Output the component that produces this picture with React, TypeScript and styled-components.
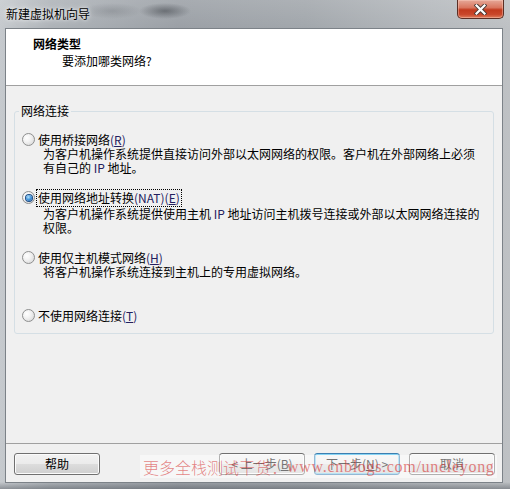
import React from 'react';
import styled, { createGlobalStyle } from 'styled-components';

const GlobalStyle = createGlobalStyle`
  html, body {
    margin: 0;
    padding: 0;
  }
  body {
    width: 510px;
    height: 489px;
    overflow: hidden;
    font-family: "Noto Sans CJK SC", "Liberation Sans", sans-serif;
    font-size: 12px;
    color: #000;
  }
`;

const Window = styled.div`
  position: relative;
  width: 510px;
  height: 489px;
  box-sizing: border-box;
  padding: 0 7px 6px 5px;
  display: flex;
  flex-direction: column;
  background:
    radial-gradient(ellipse 26px 8px at 165px 11px, rgba(60, 64, 70, 0.55), transparent),
    radial-gradient(ellipse 30px 8px at 112px 11px, rgba(100, 104, 110, 0.3), transparent),
    linear-gradient(to top, rgba(70, 76, 84, 0.45) 0, rgba(70, 76, 84, 0) 7px),
    linear-gradient(to bottom, rgba(255, 255, 255, 0.12) 0, rgba(255, 255, 255, 0) 28px),
    linear-gradient(to right, #c6cace 0%, #aeb3b8 10%, #9ba0a6 35%, #a2a7ac 60%, #b5b9bd 85%, #bec1c4 100%);
`;

const TitleBar = styled.div`
  height: 28px;
  flex: none;
  display: flex;
  align-items: flex-start;
  justify-content: space-between;
`;

const TitleText = styled.div`
  margin: 7px 0 0 1px;
  line-height: 14px;
  text-shadow: 0 0 6px rgba(255, 255, 255, 0.9), 0 0 3px rgba(255, 255, 255, 0.7);
`;

const CloseButton = styled.div`
  width: 47px;
  height: 19px;
  box-sizing: border-box;
  margin-right: -1px;
  border: 1px solid #5b2e25;
  border-top: none;
  border-radius: 0 0 5px 5px;
  background: linear-gradient(#e6a898 0%, #d9765f 42%, #c23a1e 55%, #c9462a 80%, #de7c5c 100%);
  box-shadow: inset 0 0 0 1px rgba(255, 215, 200, 0.4);
  display: flex;
  align-items: center;
  justify-content: center;
`;

const Client = styled.div`
  flex: 1;
  display: flex;
  flex-direction: column;
  background: #f0f0f0;
  border: 1px solid #7c8288;
`;

const Header = styled.div`
  height: 57px;
  flex: none;
  box-sizing: border-box;
  background: #fff;
  border-bottom: 1px solid #a0a0a0;
  padding: 8px 0 0 27px;
  line-height: 14px;
`;

const HeaderTitle = styled.div`
  font-weight: bold;
`;

const HeaderSubtitle = styled.div`
  margin: 3px 0 0 29px;
`;

const Body = styled.div`
  flex: 1;
  padding: 18px 8px 0;
`;

const GroupBox = styled.fieldset`
  margin: 0;
  padding: 15px 7px 10px;
  border: 1px solid #d5dfe5;
  border-radius: 3px;
  display: flex;
  flex-direction: column;
  gap: 16px;
`;

const GroupLegend = styled.legend`
  margin-left: -3px;
  padding: 0 2px;
  line-height: 14px;
`;

const Option = styled.div`
  display: flex;
  flex-direction: column;
`;

const OptionLine = styled.label`
  display: flex;
  align-items: flex-start;
  gap: 3px;
  line-height: 14px;
`;

const RadioCircle = styled.span<{ $checked?: boolean }>`
  flex: none;
  width: 13px;
  height: 13px;
  box-sizing: border-box;
  border-radius: 50%;
  border: 1px solid #8e8f8f;
  background: radial-gradient(circle at 35% 35%, #ffffff 0%, #f2f2f2 40%, #d2d2d2 100%);
  display: flex;
  align-items: center;
  justify-content: center;

  &::after {
    content: '';
    display: ${(p) => (p.$checked ? 'block' : 'none')};
    width: 6px;
    height: 6px;
    border-radius: 50%;
    background: radial-gradient(circle at 40% 35%, #b4e2fb 0%, #3f93da 50%, #1a4f9a 100%);
    box-shadow: 0 0 0 1px #1d4c84;
  }
`;

const OptionText = styled.span<{ $focused?: boolean }>`
  outline: ${(p) => (p.$focused ? '1px dotted #000' : 'none')};
  outline-offset: 1px;
  margin-bottom: ${(p) => (p.$focused ? '2px' : '0')};
`;

const Description = styled.div`
  padding-left: 21px;
  min-height: 28px;
  line-height: 14px;
`;

const Latin = styled.span`
  color: #23205e;
`;

const Key = styled.span`
  text-decoration: underline;
  text-underline-offset: 1px;
`;

const Footer = styled.div`
  flex: none;
  border-top: 1px solid #a0a0a0;
  padding: 9px 7px 7px 8px;
  display: flex;
  align-items: center;
  justify-content: space-between;
`;

const ButtonGroup = styled.div`
  display: flex;
  gap: 9px;
`;

const Button = styled.button<{ $default?: boolean }>`
  width: 86px;
  height: 22px;
  padding: 0;
  box-sizing: border-box;
  font: inherit;
  line-height: 14px;
  color: #000;
  border: 1px solid ${(p) => (p.$default ? '#3c7fb1' : '#707070')};
  border-radius: 3px;
  background: linear-gradient(#f2f2f2 0%, #ebebeb 50%, #dddddd 50%, #cfcfcf 100%);
  box-shadow: inset 0 0 0 1px ${(p) => (p.$default ? 'rgba(90, 200, 245, 0.7)' : '#fbfbfb')};
`;

const Watermark = styled.div`
  position: absolute;
  left: 140px;
  top: 455px;
  width: 357px;
  height: 23px;
  padding-left: 3px;
  box-sizing: border-box;
  display: flex;
  align-items: center;
  white-space: nowrap;
  pointer-events: none;
  background: rgba(255, 255, 255, 0.45);
  color: rgba(214, 50, 50, 0.6);
  font-family: "Liberation Serif", "Noto Sans CJK SC", serif;
  font-size: 16px;
  letter-spacing: 0.7px;
`;

const WatermarkCjk = styled.span`
  font-family: "Noto Sans CJK SC", serif;
  font-weight: 300;
  letter-spacing: 0;
`;

const CloseIcon = () => (
  <svg width="13" height="11" viewBox="0 0 13 11">
    <path d="M2.5 1.5 L10.5 9.5 M10.5 1.5 L2.5 9.5" stroke="#4a3a36" strokeWidth="4" strokeLinecap="square" />
    <path d="M2.5 1.5 L10.5 9.5 M10.5 1.5 L2.5 9.5" stroke="#fff" strokeWidth="2.2" strokeLinecap="square" />
  </svg>
);

type Choice = {
  label: React.ReactNode;
  description?: React.ReactNode;
  checked?: boolean;
};

const choices: Choice[] = [
  {
    label: (
      <>
        使用桥接网络<Latin>(<Key>R</Key>)</Latin>
      </>
    ),
    description: (
      <>
        为客户机操作系统提供直接访问外部以太网网络的权限。客户机在外部网络上必须
        <br />
        有自己的 <Latin>IP</Latin> 地址。
      </>
    ),
  },
  {
    label: (
      <>
        使用网络地址转换<Latin>(NAT)(<Key>E</Key>)</Latin>
      </>
    ),
    description: (
      <>
        为客户机操作系统提供使用主机 <Latin>IP</Latin> 地址访问主机拨号连接或外部以太网网络连接的
        <br />
        权限。
      </>
    ),
    checked: true,
  },
  {
    label: (
      <>
        使用仅主机模式网络<Latin>(<Key>H</Key>)</Latin>
      </>
    ),
    description: '将客户机操作系统连接到主机上的专用虚拟网络。',
  },
  {
    label: (
      <>
        不使用网络连接<Latin>(<Key>T</Key>)</Latin>
      </>
    ),
  },
];

const App: React.FC = () => {
  return (
    <>
      <GlobalStyle />
      <Window>
        <TitleBar>
          <TitleText>新建虚拟机向导</TitleText>
          <CloseButton>
            <CloseIcon />
          </CloseButton>
        </TitleBar>
        <Client>
          <Header>
            <HeaderTitle>网络类型</HeaderTitle>
            <HeaderSubtitle>要添加哪类网络?</HeaderSubtitle>
          </Header>
          <Body>
            <GroupBox>
              <GroupLegend>网络连接</GroupLegend>
              {choices.map((choice, i) => (
                <Option key={i}>
                  <OptionLine>
                    <RadioCircle $checked={choice.checked} />
                    <OptionText $focused={choice.checked}>{choice.label}</OptionText>
                  </OptionLine>
                  {choice.description && <Description>{choice.description}</Description>}
                </Option>
              ))}
            </GroupBox>
          </Body>
          <Footer>
            <Button>帮助</Button>
            <ButtonGroup>
              <Button>
                &lt; 上一步(<Key>B</Key>)
              </Button>
              <Button $default>
                下一步(<Key>N</Key>) &gt;
              </Button>
              <Button>取消</Button>
            </ButtonGroup>
          </Footer>
        </Client>
        <Watermark>
          <WatermarkCjk>更多全栈测试干货：</WatermarkCjk>
          www.cnblogs.com/uncleyong
        </Watermark>
      </Window>
    </>
  );
};

export default App;
